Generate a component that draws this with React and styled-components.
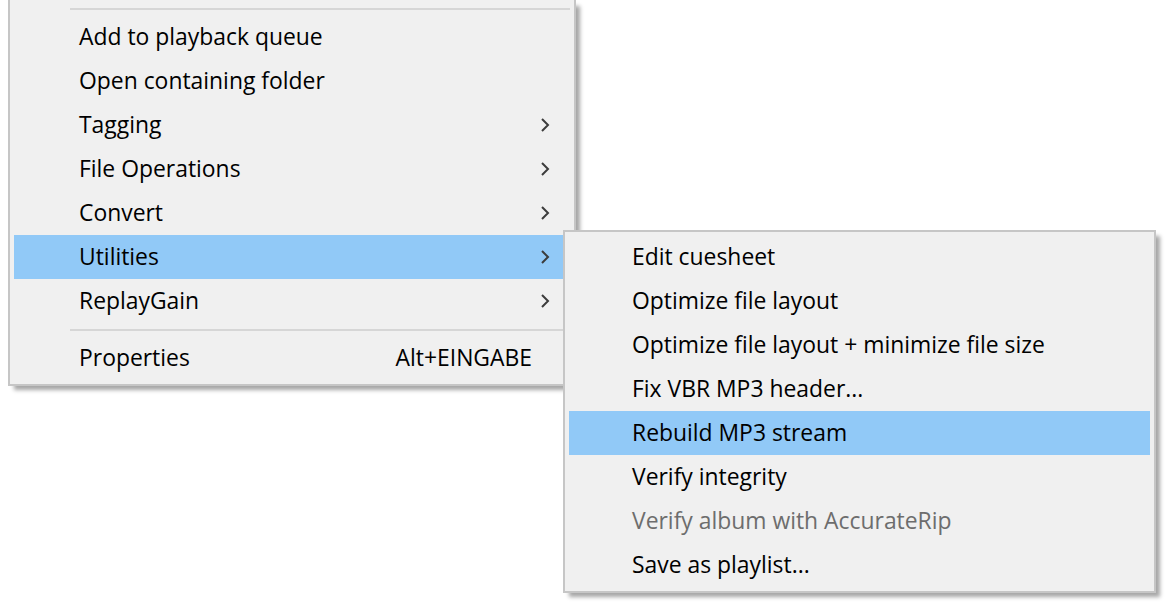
import React from "react";
import styled, { createGlobalStyle } from "styled-components";

const Global = createGlobalStyle`
  html, body { margin: 0; padding: 0; background: #ffffff; }
  body { font-family: "Open Sans", "Noto Sans", "DejaVu Sans", sans-serif; }
  * { box-sizing: border-box; }
`;

const Page = styled.div`
  position: relative;
  width: 1168px;
  height: 607px;
  overflow: hidden;
  background: #ffffff;
`;

const Menu = styled.div`
  display: flex;
  flex-direction: column;
  background: #f0f0f0;
  border: 2px solid #c6c6c6;
  box-shadow: 5px 5px 4px -1px rgba(0, 0, 0, 0.35);
  width: ${(p) => p.$width}px;
  padding: ${(p) => p.$padTop}px 4px 4px 4px;
`;

const MainMenu = styled(Menu)`
  margin-left: 8px;
  border-top: none;
`;

const SubMenu = styled(Menu)`
  position: absolute;
  left: 563px;
  top: 230px;
`;

const Row = styled.div`
  display: flex;
  align-items: center;
  height: 44px;
  padding-bottom: 2px;
  padding-left: ${(p) => p.$indent}px;
  padding-right: ${(p) => p.$right}px;
  background: ${(p) => (p.$active ? "#91c9f7" : "transparent")};
  color: ${(p) => (p.$disabled ? "#6d6d6d" : "#000000")};
  font-size: 22.9px;
  white-space: nowrap;
`;

const Label = styled.span`
  flex: 1;
`;

const Shortcut = styled.span`
  margin-right: 18px;
`;

const Separator = styled.div`
  height: 13px;
  display: flex;
  align-items: center;
  padding-left: 56px;
  &::after {
    content: "";
    flex: 1;
    height: 2px;
    background: #d6d6d6;
  }
`;

const ChevronBox = styled.span`
  display: flex;
  padding-top: 2px;
`;

const Chevron = () => (
  <ChevronBox>
    <svg width="10" height="16" viewBox="0 0 10 16">
      <polyline points="2,2 8,8 2,14" fill="none" stroke="#3c3c3c" strokeWidth="2" />
    </svg>
  </ChevronBox>
);

const mainItems = [
  { sep: true },
  { label: "Add to playback queue" },
  { label: "Open containing folder" },
  { label: "Tagging", sub: true },
  { label: "File Operations", sub: true },
  { label: "Convert", sub: true },
  { label: "Utilities", sub: true, active: true },
  { label: "ReplayGain", sub: true },
  { sep: true },
  { label: "Properties", shortcut: "Alt+EINGABE" },
];

const subItems = [
  { label: "Edit cuesheet" },
  { label: "Optimize file layout" },
  { label: "Optimize file layout + minimize file size" },
  { label: "Fix VBR MP3 header..." },
  { label: "Rebuild MP3 stream", active: true },
  { label: "Verify integrity" },
  { label: "Verify album with AccurateRip", disabled: true },
  { label: "Save as playlist..." },
];

const renderItems = (items, indent, right) =>
  items.map((it, i) =>
    it.sep ? (
      <Separator key={i} />
    ) : (
      <Row key={i} $indent={indent} $right={right} $active={it.active} $disabled={it.disabled}>
        <Label>{it.label}</Label>
        {it.shortcut && <Shortcut>{it.shortcut}</Shortcut>}
        {it.sub && <Chevron />}
      </Row>
    )
  );

export default function App() {
  return (
    <Page>
      <Global />
      <MainMenu $width={568} $padTop={2}>
        {renderItems(mainItems, 65, 20)}
      </MainMenu>
      <SubMenu $width={593} $padTop={3}>
        {renderItems(subItems, 63, 20)}
      </SubMenu>
    </Page>
  );
}
